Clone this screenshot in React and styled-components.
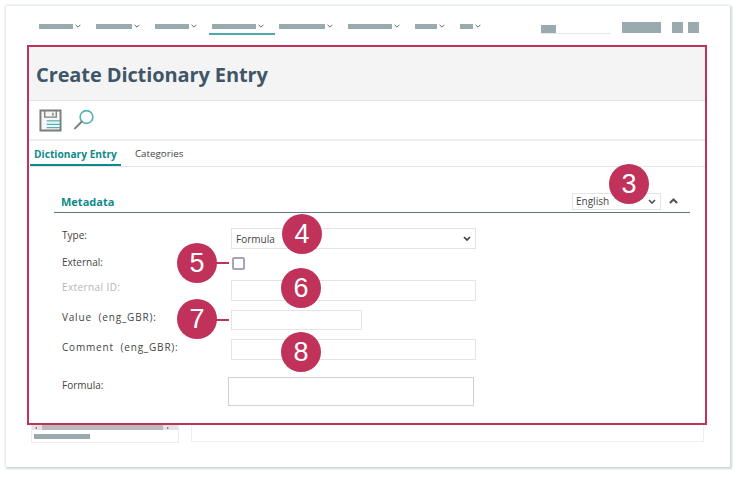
import styled, { createGlobalStyle } from "styled-components";

const GlobalStyle = createGlobalStyle`
  html, body {
    margin: 0;
    padding: 0;
    background: #ffffff;
  }
  body {
    font-family: "Open Sans", "Noto Sans", sans-serif;
  }
`;

const RED = "#c0325a";
const TEAL = "#0f8a8a";

const Page = styled.div`
  width: 740px;
  height: 478px;
  padding: 6px 0 0 6px;
  box-sizing: border-box;
  overflow: hidden;
`;

const Window = styled.div`
  width: 724px;
  height: 461px;
  background: #fff;
  box-shadow: 1px 1px 2px 1px #ccd8d9, -1px -1px 2px 0 #e8eded;
`;

const Nav = styled.div`
  height: 39px;
  box-sizing: border-box;
  display: flex;
  justify-content: space-between;
  padding: 16px 31px 0 33px;
`;

const NavItems = styled.div`
  display: flex;
  gap: 15px;
  height: 12px;
`;

const NavItem = styled.div`
  position: relative;
  display: flex;
  align-items: flex-start;
  gap: 2px;
  height: 12px;
  padding-top: 2px;
  box-sizing: border-box;
  &::after {
    content: "";
    display: ${(p) => (p.$active ? "block" : "none")};
    position: absolute;
    left: -3px;
    right: -11px;
    top: 11px;
    height: 1.5px;
    background: #4fa9a8;
  }
`;

const Bar = styled.div`
  width: ${(p) => p.$w}px;
  height: ${(p) => p.$h || 5}px;
  background: #9aabb0;
`;

const NavRight = styled.div`
  display: flex;
  align-items: flex-start;
`;

const SearchBox = styled.div`
  width: 70px;
  height: 12px;
  margin-top: 0;
  padding-top: 3px;
  box-sizing: border-box;
  border-bottom: 1px solid #e6e9e9;
  margin-right: 11px;
`;

const NavButton = styled(Bar)`
  margin-right: ${(p) => p.$gap || 0}px;
`;

const Frame = styled.div`
  position: relative;
  z-index: 1;
  width: 680px;
  height: 380px;
  margin-left: 21px;
  box-sizing: border-box;
  border: 2px solid ${RED};
  background: #fff;
`;

const Header = styled.div`
  height: 54px;
  box-sizing: border-box;
  background: #f4f4f4;
  border-bottom: 1px solid #e3e3e3;
  display: flex;
  align-items: center;
  padding-left: 7px;
`;

const Title = styled.h1`
  margin: 1px 0 0;
  font-size: 20px;
  font-weight: 700;
  color: #3f5668;
  letter-spacing: -0.1px;
`;

const Toolbar = styled.div`
  height: 40px;
  box-sizing: border-box;
  border-bottom: 2px solid #efefef;
  display: flex;
  align-items: center;
  gap: 11px;
  padding: 0 0 0 10px;
`;

const Tabs = styled.div`
  height: 26px;
  box-sizing: border-box;
  border-bottom: 1px solid #e6e6e6;
  display: flex;
  gap: 10px;
  padding-left: 1px;
`;

const Tab = styled.div`
  height: 25px;
  box-sizing: border-box;
  padding: 5px 4px 0;
  font-size: ${(p) => (p.$active ? "10.2px" : "9.8px")};
  line-height: 16px;
  font-weight: ${(p) => (p.$active ? 700 : 400)};
  color: ${(p) => (p.$active ? TEAL : "#444")};
  border-bottom: ${(p) => (p.$active ? `2px solid ${TEAL}` : "none")};
`;

const Section = styled.div`
  padding: 26px 15px 0 25px;
`;

const SectionHead = styled.div`
  position: relative;
  height: 20px;
  box-sizing: border-box;
  border-bottom: 1px solid #5f7585;
  display: flex;
  align-items: center;
  justify-content: space-between;
  padding-left: 7px;
`;

const SectionTitle = styled.div`
  font-size: 11px;
  line-height: 18px;
  margin-top: -2px;
  font-weight: 700;
  color: ${TEAL};
`;

const SectionTools = styled.div`
  display: flex;
  align-items: center;
  gap: 8px;
  margin-bottom: 3px;
  margin-right: 12px;
`;

const SelectBox = styled.div`
  position: relative;
  width: ${(p) => p.$w}px;
  height: ${(p) => p.$h}px;
  box-sizing: border-box;
  border: 1px solid #e4e4e4;
  background: #fff;
  display: flex;
  align-items: center;
  justify-content: space-between;
  padding: 0 4px 0 ${(p) => p.$left || 4}px;
  font-size: 10px;
  color: #444;
`;

const Form = styled.div`
  padding: 15px 0 0 8px;
  display: flex;
  flex-direction: column;
`;

const Row = styled.div`
  display: grid;
  grid-template-columns: ${(p) => p.$col || 169}px 1fr;
  height: ${(p) => p.$h}px;
`;

const Label = styled.div`
  font-size: 10px;
  line-height: 14px;
  margin-top: ${(p) => p.$top || 0}px;
  letter-spacing: ${(p) => p.$track || 0}px;
  color: ${(p) => (p.$muted ? "#b5b5b5" : "#444")};
  white-space: pre;
`;

const Field = styled.div`
  position: relative;
  width: ${(p) => p.$w}px;
  height: ${(p) => p.$h}px;
`;

const TextInput = styled.input`
  display: block;
  width: 100%;
  height: 100%;
  box-sizing: border-box;
  margin: 0;
  padding: 0;
  border: 1px solid ${(p) => p.$line || "#e4e4e4"};
  background: #fff;
  outline: none;
`;

const CheckBox = styled.input`
  appearance: none;
  display: block;
  width: 13px;
  height: 13px;
  margin: 0 0 0 1px;
  box-sizing: border-box;
  border: 2px solid #a6a6b2;
  border-radius: 2px;
  background: #fff;
`;

const Badge = styled.div`
  position: absolute;
  z-index: 2;
  left: ${(p) => p.$x}px;
  top: ${(p) => p.$y}px;
  width: 40px;
  height: 40px;
  border-radius: 50%;
  background: ${RED};
  color: #fff;
  font-family: "Liberation Sans", Arial, sans-serif;
  font-size: 27px;
  line-height: 40px;
  text-align: center;
`;

const Leader = styled.div`
  position: absolute;
  left: -15px;
  top: ${(p) => p.$y}px;
  width: 13px;
  height: 1.5px;
  background: ${RED};
`;

const Lower = styled.div`
  display: flex;
  gap: 12px;
  padding-left: 25px;
  height: 18px;
`;

const ListPanel = styled.div`
  width: 148px;
  box-sizing: border-box;
  border: 1px solid #eeeeee;
  border-top: none;
`;

const ScrollTrack = styled.div`
  height: 5px;
  background: #e4e4e4;
  display: flex;
  align-items: center;
  justify-content: space-between;
  padding: 0 9px 0 3px;
  font-size: 0;
`;

const ScrollThumb = styled.div`
  width: 121px;
  height: 5px;
  background: #bbbbbb;
`;

const ScrollArrow = styled.div`
  width: 0;
  height: 0;
  border-top: 1.5px solid transparent;
  border-bottom: 1.5px solid transparent;
  border-${(p) => (p.$right ? "left" : "right")}: 2px solid #666;
`;

const ListBar = styled(Bar)`
  margin: 4px 0 0 2px;
`;

const DetailPanel = styled.div`
  width: 513px;
  height: 17px;
  box-sizing: border-box;
  border: 1px solid #eeeeee;
  border-top: none;
`;

const Chevron = ({ w = 6, h = 4, color = "#5a6a72", sw = 1, up = false }) => (
  <svg width={w} height={h} viewBox="0 0 6 4" style={{ flex: "none" }}>
    <polyline
      points={up ? "0.6,3.4 3,1 5.4,3.4" : "0.6,0.8 3,3.2 5.4,0.8"}
      fill="none"
      stroke={color}
      strokeWidth={sw}
    />
  </svg>
);

const SaveIcon = () => (
  <svg width="23" height="23" viewBox="0 0 24 24">
    <path d="M1.5 1.5H22.5V22.5H1.5Z" fill="#f6f6f6" stroke="#7d7d7d" strokeWidth="2" />
    <path d="M6 2V8.5H18V2" fill="none" stroke="#7d7d7d" strokeWidth="1.4" />
    <path d="M14.5 4V7" stroke="#7d7d7d" strokeWidth="1.4" />
    <path d="M8 12.5H22M8 16H22M8 19.5H22" stroke="#4fb3b0" strokeWidth="1.3" />
  </svg>
);

const SearchIcon = () => (
  <svg width="21" height="22" viewBox="0 0 21 22">
    <circle cx="13.5" cy="8" r="6.4" fill="none" stroke="#4fb3b0" strokeWidth="1.6" />
    <path d="M8.6 12.8L2 19.4" stroke="#7d7d7d" strokeWidth="2" strokeLinecap="round" />
  </svg>
);

const navBars = [34, 36, 34, 44, 46, 44, 22, 13];

export default function App() {
  return (
    <Page>
      <GlobalStyle />
      <Window>
        <Nav>
          <NavItems>
            {navBars.map((w, i) => (
              <NavItem key={i} $active={i === 3}>
                <Bar $w={w} />
                <Chevron />
              </NavItem>
            ))}
          </NavItems>
          <NavRight>
            <SearchBox>
              <Bar $w={15} $h={8} />
            </SearchBox>
            <NavButton $w={39} $h={11} $gap={11} />
            <NavButton $w={11} $h={11} $gap={5} />
            <NavButton $w={11} $h={11} />
          </NavRight>
        </Nav>

        <Frame>
          <Header>
            <Title>Create Dictionary Entry</Title>
          </Header>
          <Toolbar>
            <SaveIcon />
            <SearchIcon />
          </Toolbar>
          <Tabs>
            <Tab $active>Dictionary Entry</Tab>
            <Tab>Categories</Tab>
          </Tabs>
          <Section>
            <SectionHead>
              <SectionTitle>Metadata</SectionTitle>
              <SectionTools>
                <SelectBox $w={89} $h={17} $left={3}>
                  English
                  <Chevron w={8} h={5} color="#555" sw={1.4} />
                  <Badge $x={36} $y={-30}>3</Badge>
                </SelectBox>
                <Chevron w={9} h={6} color="#555" sw={1.4} up />
              </SectionTools>
            </SectionHead>
            <Form>
              <Row $h={29}>
                <Label>Type:</Label>
                <SelectBox $w={245} $h={21}>
                  Formula
                  <Chevron w={8} h={5} color="#444" sw={1.4} />
                  <Badge $x={50} $y={-15}>4</Badge>
                </SelectBox>
              </Row>
              <Row $h={23}>
                <Label $top={-2}>External:</Label>
                <Field $w={14} $h={13}>
                  <CheckBox type="checkbox" />
                  <Leader $y={5} />
                  <Badge $x={-54} $y={-14}>5</Badge>
                </Field>
              </Row>
              <Row $h={30}>
                <Label $muted $track={0.4}>External ID:</Label>
                <Field $w={245} $h={21}>
                  <TextInput />
                  <Badge $x={50} $y={-12}>6</Badge>
                </Field>
              </Row>
              <Row $h={29}>
                <Label $track={0.8}>{"Value  (eng_GBR):"}</Label>
                <Field $w={131} $h={20}>
                  <TextInput />
                  <Leader $y={9} />
                  <Badge $x={-54} $y={-11}>7</Badge>
                </Field>
              </Row>
              <Row $h={38}>
                <Label $top={1} $track={0.8}>{"Comment  (eng_GBR):"}</Label>
                <Field $w={245} $h={21}>
                  <TextInput />
                  <Badge $x={50} $y={-7}>8</Badge>
                </Field>
              </Row>
              <Row $h={29} $col={166}>
                <Label $top={1}>Formula:</Label>
                <Field $w={246} $h={29}>
                  <TextInput $line="#cfcfd6" />
                </Field>
              </Row>
            </Form>
          </Section>
        </Frame>

        <Lower>
          <ListPanel>
            <ScrollTrack>
              <ScrollArrow />
              <ScrollThumb />
              <ScrollArrow $right />
            </ScrollTrack>
            <ListBar $w={56} />
          </ListPanel>
          <DetailPanel />
        </Lower>
      </Window>
    </Page>
  );
}
